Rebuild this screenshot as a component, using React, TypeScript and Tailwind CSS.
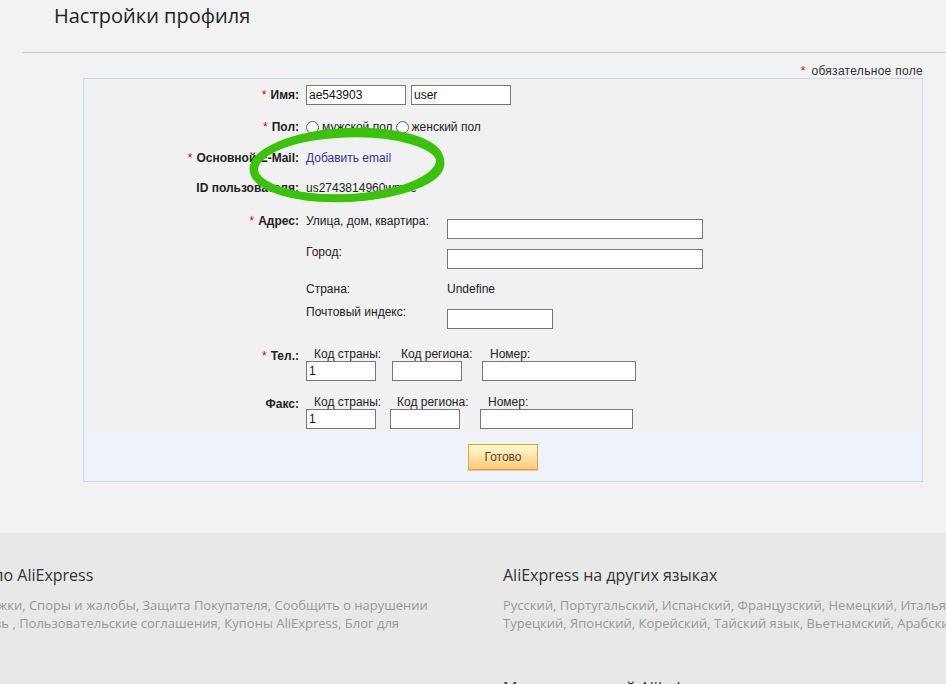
import React from "react";

function Req() {
  return <span className="mr-[4px] font-normal text-[#e00000]">*</span>;
}

function Label({ children, req, className = "" }: { children: React.ReactNode; req?: boolean; className?: string }) {
  return (
    <div className={"w-[215px] shrink-0 text-right font-bold leading-[14px] text-[#222] " + className}>
      {req && <Req />}
      {children}
    </div>
  );
}

function Field({ value = "", className = "" }: { value?: string; className?: string }) {
  return (
    <div className={"h-[20px] border border-[#767676] bg-white px-[2px] text-[12px] leading-[18px] text-[#111] " + className}>
      {value}
    </div>
  );
}

function Radio() {
  return <span className="inline-block h-[13px] w-[13px] shrink-0 rounded-full border border-[#5f5f5f] bg-white" />;
}

export default function App() {
  return (
    <div className="h-[684px] w-[946px] overflow-hidden bg-[#f2f2f2] font-['Liberation_Sans',Arial,sans-serif] text-[12px] text-[#222]">
      <div className="ml-[23px] h-[53px] border-b border-[#cbcbcb] pl-[31px] pt-[2px] font-['Open_Sans',sans-serif] text-[20px] leading-[28px] text-[#222]">
        Настройки профиля
      </div>

      <div className="ml-[83px] w-[840px]">
        <div className="h-[25px] pt-[11px] text-right leading-[14px] text-[#333]">
          <span className="mr-[6px] text-[#e00000]">*</span>
          <span className="tracking-[0.3px]">обязательное поле</span>
        </div>

        <div className="relative border border-[#c9d9ef] bg-[#f1f1f1]">
          {/* Имя */}
          <div className="mt-[6px] flex h-[20px] items-center">
            <Label req>Имя:</Label>
            <div className="ml-[7px] flex gap-[5px]">
              <Field value="ae543903" className="w-[100px]" />
              <Field value="user" className="w-[100px]" />
            </div>
          </div>

          {/* Пол */}
          <div className="mt-[12px] flex h-[20px] items-center">
            <Label req>Пол:</Label>
            <div className="ml-[7px] flex items-center leading-[14px]">
              <Radio />
              <span className="ml-[3px] mr-[3px]">мужской пол</span>
              <Radio />
              <span className="ml-[3px]">женский пол</span>
            </div>
          </div>

          {/* E-mail */}
          <div className="mt-[11px] flex h-[20px] items-center">
            <Label req>Основной E-Mail:</Label>
            <div className="ml-[7px] leading-[14px] text-[#333399]">Добавить email</div>
          </div>

          {/* ID */}
          <div className="mt-[10px] flex h-[20px] items-center">
            <Label>ID пользователя:</Label>
            <div className="ml-[7px] leading-[14px] text-[#222]">us2743814960wmve</div>
          </div>

          {/* Адрес */}
          <div className="mt-[16px] flex items-start">
            <Label req>Адрес:</Label>
            <div className="ml-[7px]">
              <div className="flex items-start">
                <div className="w-[141px] leading-[14px]">Улица, дом, квартира:</div>
                <Field className="mt-[5px] w-[256px]" />
              </div>
              <div className="mt-[6px] flex items-start">
                <div className="w-[141px] leading-[14px]">Город:</div>
                <Field className="mt-[4px] w-[256px]" />
              </div>
              <div className="mt-[13px] flex items-start leading-[14px]">
                <div className="w-[141px]">Страна:</div>
                <div>Undefine</div>
              </div>
              <div className="mt-[9px] flex items-start">
                <div className="w-[141px] leading-[14px]">Почтовый индекс:</div>
                <Field className="mt-[4px] w-[106px]" />
              </div>
            </div>
          </div>

          {/* Тел */}
          <div className="mt-[18px] flex items-start">
            <Label req className="mt-[2px]">Тел.:</Label>
            <div className="ml-[7px] flex leading-[14px]">
              <div className="w-[86px]">
                <div className="pl-[8px]">Код страны:</div>
                <Field value="1" className="w-[70px]" />
              </div>
              <div className="w-[90px]">
                <div className="pl-[9px]">Код региона:</div>
                <Field className="w-[70px]" />
              </div>
              <div>
                <div className="pl-[8px]">Номер:</div>
                <Field className="w-[154px]" />
              </div>
            </div>
          </div>

          {/* Факс */}
          <div className="mt-[14px] flex items-start">
            <Label className="mt-[2px]">Факс:</Label>
            <div className="ml-[7px] flex leading-[14px]">
              <div className="w-[84px]">
                <div className="pl-[8px]">Код страны:</div>
                <Field value="1" className="w-[70px]" />
              </div>
              <div className="w-[90px]">
                <div className="pl-[7px]">Код региона:</div>
                <Field className="w-[70px]" />
              </div>
              <div>
                <div className="pl-[8px]">Номер:</div>
                <Field className="w-[153px]" />
              </div>
            </div>
          </div>

          {/* Кнопка */}
          <div className="mt-[4px] flex h-[48px] justify-center bg-[#eef2f9] pt-[11px]">
            <button className="h-[26px] w-[70px] border border-[#f1a02a] bg-gradient-to-b from-[#fffbd2] to-[#ffc97c] text-[12px] leading-[24px] text-[#6a3f1e] shadow-[0_1px_0_#c8c8c8]">
              Готово
            </button>
          </div>

          {/* green marker ellipse */}
          <svg
            className="pointer-events-none absolute left-[161px] top-[43px]"
            width="210"
            height="90"
            viewBox="0 0 210 90"
          >
            <ellipse
              cx="102"
              cy="43"
              rx="93"
              ry="33"
              fill="none"
              stroke="#3bc20a"
              strokeWidth="8"
              transform="rotate(-3 102 43)"
            />
            <ellipse
              cx="102"
              cy="44"
              rx="94"
              ry="32"
              fill="none"
              stroke="#3bc20a"
              strokeWidth="7"
              transform="rotate(-2 102 44)"
            />
          </svg>
        </div>
      </div>

      {/* Footer */}
      <div className="mt-[51px] h-[200px] bg-[#e8e8e8] font-['Open_Sans',sans-serif]">
        <div className="-ml-[91px] flex pt-[31px]">
          <div className="w-[594px] shrink-0">
            <div className="whitespace-nowrap pl-[14px] text-[16px] leading-[22px] text-[#333]">Помощь по AliExpress</div>
            <div className="mt-[10px] whitespace-nowrap text-[13px] leading-[18px] text-[#999]">
              <div>Центр поддержки, Споры и жалобы, Защита Покупателя, Сообщить о нарушении</div>
              <div>Обратная связь , Пользовательские соглашения, Купоны AliExpress, Блог для</div>
            </div>
          </div>
          <div className="w-[575px] shrink-0">
            <div className="whitespace-nowrap text-[16px] leading-[22px] text-[#333]">AliExpress на других языках</div>
            <div className="mt-[10px] whitespace-nowrap text-[13px] leading-[18px] text-[#999]">
              <div>Русский, Португальский, Испанский, Французский, Немецкий, Итальянский, Голландский,</div>
              <div>Турецкий, Японский, Корейский, Тайский язык, Вьетнамский, Арабский, Иврит, Польский</div>
            </div>
            <div className="mt-[45px] whitespace-nowrap text-[16px] leading-[22px] text-[#333]">Международный Alibaba</div>
          </div>
        </div>
      </div>
    </div>
  );
}
